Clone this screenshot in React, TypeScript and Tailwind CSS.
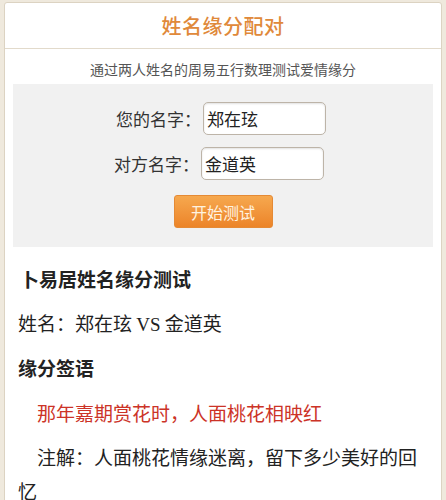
import React from 'react'

const cjk = { fontFamily: '"Noto Sans CJK SC", "Noto Sans", sans-serif' }

function NameRow({ label, value }: { label: string; value: string }) {
  return (
    <div className="flex items-center justify-center gap-[2px]">
      <span className="text-[17px] text-[#333]">{label}</span>
      <input
        readOnly
        value={value}
        className="h-[33px] w-[123px] rounded-[5px] border border-[#bdb4a8] bg-white px-[3px] text-[17px] text-[#222] shadow-[inset_0_1px_2px_rgba(0,0,0,0.12)] outline-none"
        style={cjk}
      />
    </div>
  )
}

export default function App() {
  return (
    <div className="h-[500px] overflow-hidden bg-[#efe9dd] px-[4px] pt-[2px]" style={cjk}>
      <div className="h-[520px] rounded-t-[3px] border border-[#dcd3c2] bg-white">
        <div className="flex h-[46px] items-center justify-center border-b border-[#e2dacb]">
          <h1 className="text-[20px] font-medium tracking-[0.5px] text-[#e0893a]">姓名缘分配对</h1>
        </div>
        <p className="pt-[11px] pb-[6px] text-center text-[14px] leading-[18px] text-[#555]">
          通过两人姓名的周易五行数理测试爱情缘分
        </p>
        <div className="mx-[8px] flex flex-col items-center gap-[15px] bg-[#f1f1f1] pt-[18px] pb-[19px]">
          <div className="mr-[8px] flex flex-col gap-[12px]">
            <div className="pl-[4px]">
              <NameRow label="您的名字：" value="郑在玹" />
            </div>
            <NameRow label="对方名字：" value="金道英" />
          </div>
          <button className="h-[33px] w-[99px] rounded-[3px] border border-[#e58a35] bg-gradient-to-b from-[#f6a84e] to-[#ec8428] text-[16px] text-[#fff3e0]">
            开始测试
          </button>
        </div>
        <div className="px-[13px] pt-[17px] text-[19px] text-[#222]">
          <h2 className="pl-[2px] font-bold leading-[30px]">卜易居姓名缘分测试</h2>
          <p className="mt-[14px] leading-[30px]">
            姓名：郑在玹 <span style={{ fontFamily: '"Liberation Serif", serif' }}>VS</span> 金道英
          </p>
          <h2 className="mt-[13px] font-bold leading-[30px]">缘分签语</h2>
          <p className="mt-[15px] indent-[19px] leading-[30px] text-[#cc3327]">那年嘉期赏花时，人面桃花相映红</p>
          <p className="mt-[12px] indent-[19px] leading-[34px]">注解：人面桃花情缘迷离，留下多少美好的回忆</p>
        </div>
      </div>
    </div>
  )
}
